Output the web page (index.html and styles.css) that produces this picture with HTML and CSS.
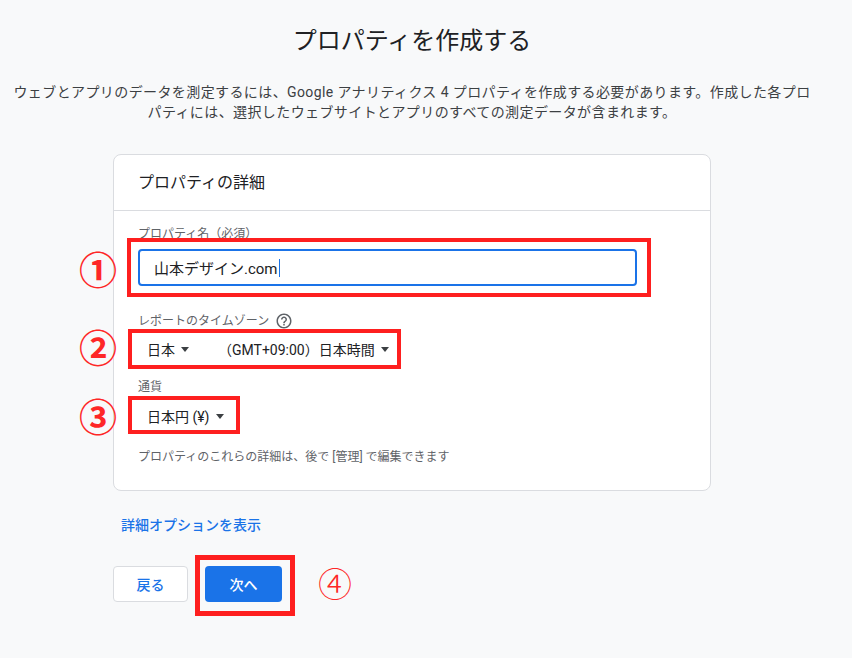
FILE: index.html
```html
<!DOCTYPE html>
<html lang="ja">

<head>
    <meta charset="UTF-8">
    <meta name="viewport" content="width=device-width, initial-scale=1.0">
    <link rel="stylesheet" href="styles.css">
    <title>プロパティを作成する</title>
</head>

<body>
    <div class="page">
        <h1 class="title">プロパティを作成する</h1>
        <p class="intro">ウェブとアプリのデータを測定するには、Google アナリティクス 4 プロパティを作成する必要があります。作成した各プロ<br>パティには、選択したウェブサイトとアプリのすべての測定データが含まれます。</p>

        <div class="card">
            <div class="card-head">プロパティの詳細</div>
            <div class="card-body">
                <div class="field">
                    <div class="label">プロパティ名（必須）</div>
                    <div class="mark mark-1">
                        <span class="num num-1">①</span>
                        <div class="input">山本デザイン.com<span class="caret"></span></div>
                    </div>
                </div>

                <div class="field field-tz">
                    <div class="label">レポートのタイムゾーン
                        <svg class="help" viewBox="0 0 24 24" width="18" height="18">
                            <path fill="#5f6368" d="M11 18h2v-2h-2v2zm1-16C6.48 2 2 6.48 2 12s4.48 10 10 10 10-4.48 10-10S17.52 2 12 2zm0 18c-4.41 0-8-3.59-8-8s3.59-8 8-8 8 3.59 8 8-3.59 8-8 8zm0-14c-2.21 0-4 1.79-4 4h2c0-1.1.9-2 2-2s2 .9 2 2c0 2-3 1.75-3 5h2c0-2.25 3-2.5 3-5 0-2.21-1.79-4-4-4z" />
                        </svg>
                    </div>
                    <div class="mark mark-2">
                        <span class="num num-2">②</span>
                        <div class="selects">
                            <span class="select country">日本<i class="arrow"></i></span>
                            <span class="select">（GMT+09:00）日本時間<i class="arrow"></i></span>
                        </div>
                    </div>
                </div>

                <div class="field field-cur">
                    <div class="label">通貨</div>
                    <div class="mark mark-3">
                        <span class="num num-3">③</span>
                        <div class="selects">
                            <span class="select">日本円 (¥)<i class="arrow"></i></span>
                        </div>
                    </div>
                </div>

                <p class="note">プロパティのこれらの詳細は、後で [管理] で編集できます</p>
            </div>
        </div>

        <div class="more"><a href="#">詳細オプションを表示</a></div>

        <div class="actions">
            <button class="btn btn-back" type="button">戻る</button>
            <div class="mark mark-4">
                <button class="btn btn-next" type="button">次へ</button>
                <span class="num num-4">④</span>
            </div>
        </div>
    </div>
</body>

</html>
```

FILE: styles.css
```css
body {
    margin: 0;
    background-color: #f8f9fa;
    font-family: Roboto, "Noto Sans CJK JP", sans-serif;
    color: #202124;
}

.page {
    width: 824px;
    padding-bottom: 40px;
}

.title {
    margin: 0;
    padding-top: 25px;
    font-size: 24px;
    font-weight: 400;
    line-height: 32px;
    text-align: center;
    color: #202124;
}

.intro {
    margin: 25px 0 0;
    font-size: 14px;
    line-height: 20px;
    letter-spacing: 0.4px;
    text-align: center;
    white-space: nowrap;
    color: #3c4043;
}

.card {
    width: 596px;
    margin: 32px auto 0;
    background-color: #fff;
    border: 1px solid #dadce0;
    border-radius: 8px;
}

.card-head {
    height: 55px;
    line-height: 55px;
    padding-left: 24px;
    font-size: 16px;
    border-bottom: 1px solid #dadce0;
}

.card-body {
    padding: 15px 24px 25px;
}

.label {
    display: flex;
    align-items: center;
    gap: 6px;
    font-size: 12px;
    line-height: 16px;
    color: #5f6368;
}

.help {
    display: block;
}

/* red annotation frames */
.mark {
    position: relative;
    width: fit-content;
}

.mark::after {
    content: "";
    position: absolute;
    border: 4px solid #fe1f1f;
    pointer-events: none;
}

.num {
    position: absolute;
    color: #fe2727;
    font-family: "Noto Sans CJK JP", sans-serif;
    line-height: 1;
}

.num-1,
.num-2,
.num-3 {
    left: -59px;
    font-size: 38px;
    font-weight: 700;
}

.mark-1 {
    width: 499px;
    margin-top: 7px;
}

.mark-1::after {
    top: -11px;
    bottom: -11px;
    left: -11px;
    right: -14px;
}

.num-1 {
    top: 0;
}

.input {
    display: flex;
    align-items: center;
    height: 33px;
    padding-left: 14px;
    border: 2px solid #1a73e8;
    border-radius: 4px;
    font-size: 15px;
    color: #202124;
}

.caret {
    display: inline-block;
    width: 1px;
    height: 18px;
    margin-left: 1px;
    background-color: #1a73e8;
}

.field-tz {
    margin-top: 26px;
}

.mark-2 {
    margin-top: 3px;
}

.mark-2::after {
    top: -4px;
    bottom: -4px;
    left: -10px;
    right: -12px;
}

.num-2 {
    top: -6px;
}

.selects {
    display: flex;
    align-items: center;
    height: 32px;
    padding-left: 9px;
    font-size: 14px;
    white-space: nowrap;
}

.select {
    display: inline-flex;
    align-items: center;
}

.country {
    width: 71px;
}

.arrow {
    display: inline-block;
    margin-left: 6px;
    border-left: 4px solid transparent;
    border-right: 4px solid transparent;
    border-top: 5px solid #3c4043;
}

.field-cur {
    margin-top: 14px;
}

.mark-3 {
    margin-top: 5px;
}

.mark-3::after {
    top: -4px;
    bottom: -2px;
    left: -10px;
    right: -16px;
}

.num-3 {
    top: -4px;
}

.note {
    margin: 17px 0 0;
    font-size: 12px;
    line-height: 16px;
    color: #5f6368;
}

.more {
    width: 598px;
    margin: 24px auto 0;
    font-size: 14px;
    line-height: 20px;
    font-weight: 500;
}

.more a {
    display: inline-block;
    padding-left: 8px;
    color: #1a73e8;
    text-decoration: none;
}

.actions {
    display: flex;
    align-items: center;
    gap: 17px;
    width: 598px;
    margin: 31px auto 0;
}

.btn {
    height: 36px;
    border-radius: 4px;
    font-family: Roboto, "Noto Sans CJK JP", sans-serif;
    font-size: 14px;
    font-weight: 500;
    cursor: pointer;
}

.btn-back {
    width: 75px;
    background-color: #fff;
    border: 1px solid #dadce0;
    color: #1a73e8;
}

.btn-next {
    display: block;
    width: 77px;
    background-color: #1a73e8;
    border: none;
    color: #fff;
}

.mark-4::after {
    top: -11px;
    bottom: -14px;
    left: -10px;
    right: -13px;
    border-width: 5px;
}

.num-4 {
    top: 0;
    left: 113px;
    font-size: 34px;
    font-weight: 300;
}
```
